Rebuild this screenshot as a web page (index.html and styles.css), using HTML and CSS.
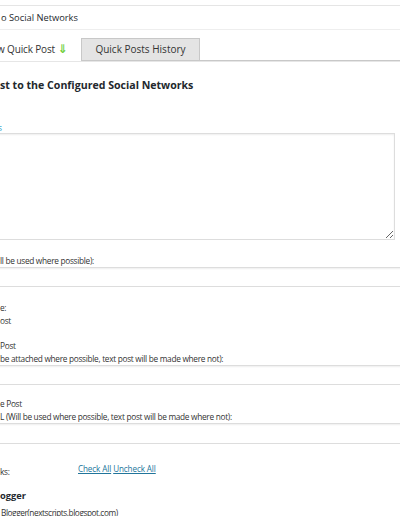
FILE: index.html
```html
<!DOCTYPE html>
<html>
<head>
<meta charset="utf-8">
<link rel="stylesheet" href="styles.css">
</head>
<body>
<div class="hdr">o Social Networks</div>
<div class="tabs">
  <div class="tab tab-active">w Quick Post <span class="arr">&#8659;</span></div>
  <div class="tab tab-off">Quick Posts History</div>
</div>
<div class="panel">
  <h2 class="title">st to the Configured Social Networks</h2>
  <div class="lbl lbl-blue">s</div>
  <textarea class="msg"></textarea>
  <div class="lbl lbl-url">ll be used where possible):</div>
  <input class="field" type="text">
  <div class="lbl lbl-type">e:</div>
  <div class="lbl lbl-opt">ost</div>
  <div class="lbl lbl-img">Post</div>
  <div class="lbl lbl-sub">be attached where possible, text post will be made where not):</div>
  <input class="field" type="text">
  <div class="lbl lbl-img">e Post</div>
  <div class="lbl lbl-sub">L (Will be used where possible, text post will be made where not):</div>
  <input class="field field-b" type="text">
  <div class="nets">
    <span class="lbl lbl-nets">ks:</span>
    <span class="links"><a href="#">Check All</a> <a href="#">Uncheck All</a></span>
  </div>
  <div class="net-title">ogger</div>
  <div class="lbl net-item">Blogger(nextscripts.blogspot.com)</div>
</div>
</body>
</html>
```
FILE: styles.css
```css
html, body {
  margin: 0;
  padding: 0;
  background: #fff;
  overflow: hidden;
}
body {
  width: 400px;
  height: 516px;
  font-family: "Open Sans", "Noto Sans", sans-serif;
  color: #333;
}
.hdr {
  margin-top: 5px;
  border-top: 1px solid #e5e5e5;
  border-bottom: 1px solid #eeeeee;
  height: 23px;
  line-height: 23px;
  font-size: 9.3px;
  color: #23282d;
  padding-left: 1px;
}
.tabs {
  margin-top: 8px;
  display: flex;
  height: 22px;
  border-bottom: 1px solid #c8c8c8;
  box-shadow: 0 1px 0 #e6e6e6;
}
.tab {
  box-sizing: border-box;
  height: 22px;
  line-height: 22px;
  font-size: 10px;
  color: #333;
}
.tab-active {
  width: 81px;
  background: #fff;
  height: 23px;
  margin-bottom: -1px;
  text-indent: -3px;
  white-space: nowrap;
  letter-spacing: -0.15px;
}
.arr {
  color: #6fcf3a;
  font-family: "DejaVu Sans", sans-serif;
  font-size: 12px;
  font-weight: bold;
}
.tab-off {
  width: 119px;
  background: #e4e4e4;
  border: 1px solid #c8c8c8;
  border-bottom: none;
  text-align: center;
  line-height: 21px;
}
.panel {
  padding-right: 5px;
}
.title {
  margin: 16px 0 0 0;
  font-size: 10.6px;
  font-weight: 700;
  line-height: 16px;
  color: #23282d;
}
.lbl {
  font-size: 8.3px;
  letter-spacing: -0.3px;
  line-height: 12px;
  white-space: nowrap;
}
.lbl-blue {
  margin-top: 29px;
  line-height: 11px;
  color: #2ea2cc;
  text-indent: -2px;
}
.msg {
  display: block;
  box-sizing: border-box;
  width: calc(100% + 20px);
  margin: 0 0 0 -20px;
  height: 107px;
  border: 1px solid #dddddd;
  box-shadow: inset 0 1px 2px rgba(0,0,0,0.07);
  background: #fff;
  resize: both;
}
.lbl-url {
  margin-top: 15px;
}
.field {
  display: block;
  box-sizing: border-box;
  width: 440px;
  margin: 0 0 0 -20px;
  height: 20px;
  border: 1px solid #dddddd;
  box-shadow: inset 0 1px 2px rgba(0,0,0,0.07);
  background: #fff;
  padding: 0;
}
.field-b {
  height: 21px;
}
.lbl-type {
  margin-top: 15px;
}
.lbl-opt {
  margin-top: 1px;
}
.lbl-img {
  margin-top: 13px;
}
.lbl-sub {
  margin-top: 1px;
}
.nets {
  margin-top: 19px;
  display: flex;
  align-items: flex-start;
  line-height: 12px;
}
.lbl-nets {
  width: 78px;
  padding-top: 3px;
}
.links {
  font-size: 8.1px;
  letter-spacing: -0.1px;
}
.links a {
  color: #21759b;
}
.net-title {
  margin-top: 12px;
  font-size: 9.3px;
  font-weight: 700;
  line-height: 12px;
  color: #23282d;
}
.net-item {
  margin-top: 5px;
  padding-left: 1px;
  letter-spacing: -0.45px;
}
```
